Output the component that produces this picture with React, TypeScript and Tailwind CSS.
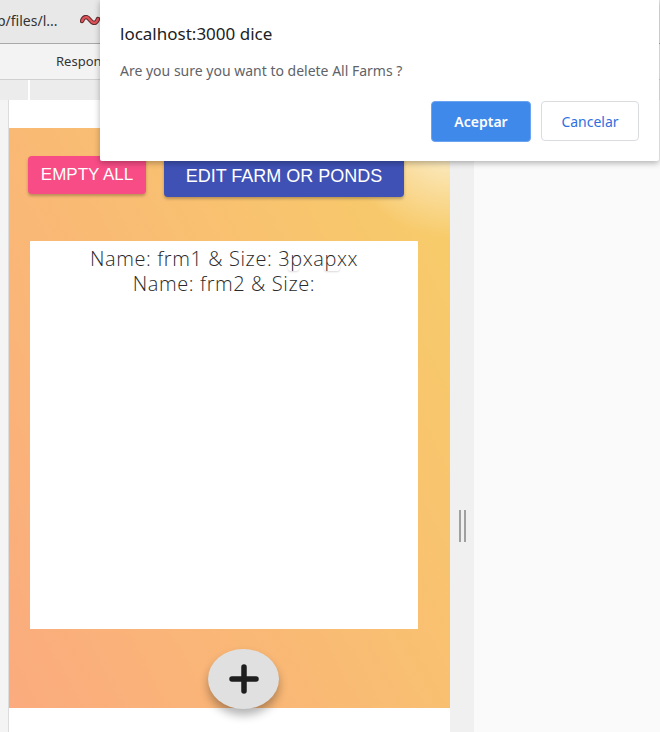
import React from 'react';

const farms = [
  { name: 'frm1', size: '3pxapxx' },
  { name: 'frm2', size: '' },
];

function Squiggle() {
  return (
    <svg width="20" height="10" viewBox="0 0 20 10">
      <path
        d="M2 6 C4 1, 7 1, 10 5 C13 9, 16 9, 18 4"
        fill="none"
        stroke="#5a2a2a"
        strokeWidth="4.5"
        strokeLinecap="round"
      />
      <path
        d="M2 6 C4 1, 7 1, 10 5 C13 9, 16 9, 18 4"
        fill="none"
        stroke="#e0525a"
        strokeWidth="2.5"
        strokeLinecap="round"
      />
    </svg>
  );
}

export default function App() {
  return (
    <div className="relative w-[660px] h-[732px] overflow-hidden bg-[#fafafa] font-['Noto_Sans',sans-serif]">
      {/* browser chrome */}
      <div className="h-[44px] bg-[#e8e8e8] border-b border-[#a8a8a8] flex items-center">
        <span className="text-[14px] text-[#333] ml-[-3px] mt-[-2px]">p/files/l...</span>
        <span className="ml-[22px] mt-[-4px]">
          <Squiggle />
        </span>
      </div>
      <div className="h-[36px] bg-[#f3f3f3] border-b border-[#d0d0d0] flex items-center">
        <span className="ml-[56px] text-[13px] text-[#333]">Responsive</span>
      </div>
      <div className="h-[20px] bg-[#ececec] flex">
        <div className="w-[30px] border-r-2 border-white" />
      </div>

      {/* viewport */}
      <div className="flex h-[632px]">
        <div className="w-[9px] bg-[#f4f4f4] border-r border-[#dcdcdc]" />
        <div className="w-[441px] bg-white pt-[28px]">
          <div className="relative h-[580px] bg-[linear-gradient(62deg,#fbab7e_0%,#f7ce68_100%)] pt-[28px] pl-[19px]">
            <div className="pointer-events-none absolute inset-0 bg-[radial-gradient(circle_at_100%_0%,rgba(255,255,255,0.95)_0px,rgba(255,255,255,0.5)_40px,rgba(255,255,255,0)_110px)]" />
            <div className="relative flex items-start">
              <button className="w-[118px] h-[38px] rounded-[4px] bg-[#f84c86] text-white text-[17px] font-['Liberation_Sans',sans-serif] shadow-[0_2px_3px_rgba(0,0,0,0.25)]">
                EMPTY ALL
              </button>
              <button className="ml-[18px] w-[240px] h-[41px] rounded-[4px] bg-[#3f51b5] text-white text-[18px] font-['Liberation_Sans',sans-serif] shadow-[0_2px_3px_rgba(0,0,0,0.25)]">
                EDIT FARM OR PONDS
              </button>
            </div>
            <div className="relative mt-[44px] ml-[2px] w-[388px] h-[388px] bg-white pt-[5px] text-center text-[20px] leading-[25px] text-[#2a2a2a] font-['Open_Sans',sans-serif] font-light tracking-[0.6px]">
              <div className="absolute left-[258px] top-[12px] w-[11px] h-[18px] rounded-[3px] bg-white shadow-[0_1px_2px_rgba(0,0,0,0.15)]" />
              <div className="absolute left-[294px] top-[12px] w-[16px] h-[18px] rounded-[3px] bg-white shadow-[0_1px_2px_rgba(0,0,0,0.15)]" />
              {farms.map((f) => (
                <div key={f.name} className="relative">
                  Name: {f.name} &amp; Size: {f.size}
                </div>
              ))}
            </div>
            <div className="relative mt-[20px] ml-[180px] w-[71px] h-[60px] rounded-[50%] bg-[#e0e0e0] flex items-center justify-center shadow-[0_6px_10px_rgba(0,0,0,0.3)]">
              <svg width="32" height="32" viewBox="0 0 32 32">
                <path d="M16 4 V28 M4 16 H28" stroke="#1e1e1e" strokeWidth="5.5" strokeLinecap="round" />
              </svg>
            </div>
          </div>
        </div>
        <div className="w-[24px] bg-[#f0f0f0] flex justify-center">
          <div className="mt-[410px] h-[32px] flex gap-[3px]">
            <div className="w-[2px] h-full bg-[#a0a0a0]" />
            <div className="w-[2px] h-full bg-[#a0a0a0]" />
          </div>
        </div>
        <div className="flex-1 bg-[#fafafa]" />
      </div>

      {/* confirm dialog */}
      <div className="absolute left-[100px] top-0 w-[559px] h-[161px] bg-white rounded-b-[2px] shadow-[0_2px_6px_rgba(0,0,0,0.3)] px-[20px]">
        <div className="pt-[22px] text-[17px] leading-[24px] text-[#202124]">localhost:3000 dice</div>
        <div className="mt-[15px] text-[14px] leading-[20px] text-[#5f6368]">Are you sure you want to delete All Farms ?</div>
        <div className="mt-[20px] flex justify-end gap-[10px]">
          <button className="w-[100px] h-[41px] rounded-[4px] bg-[#3f89ea] border border-[#6aa3f0] text-white text-[14px] font-semibold">
            Aceptar
          </button>
          <button className="w-[98px] h-[40px] rounded-[4px] bg-white border border-[#dadce0] text-[#2f6fe0] text-[14px]">
            Cancelar
          </button>
        </div>
      </div>
    </div>
  );
}
